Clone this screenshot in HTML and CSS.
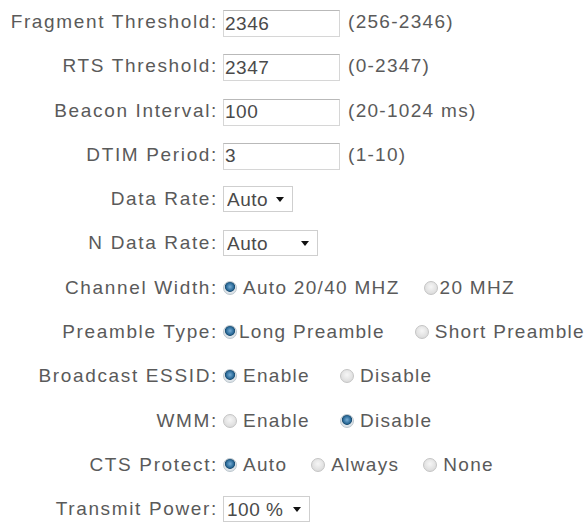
FILE: index.html
```html
<!DOCTYPE html>
<html lang="en">
<head>
<meta charset="UTF-8">
<meta name="viewport" content="width=device-width, initial-scale=1.0">
<title>Wireless Advanced Settings</title>
<link rel="stylesheet" href="styles.css">
</head>
<body>

<!-- Advanced wireless settings form -->
<form class="settings">
    <div class="row">
        <label class="label" for="frag">Fragment Threshold:</label>
        <input class="text" id="frag" type="text" value="2346">
        <span class="hint">(256-2346)</span>
    </div>
    <div class="row">
        <label class="label" for="rts">RTS Threshold:</label>
        <input class="text" id="rts" type="text" value="2347">
        <span class="hint">(0-2347)</span>
    </div>
    <div class="row">
        <label class="label" for="beacon">Beacon Interval:</label>
        <input class="text" id="beacon" type="text" value="100">
        <span class="hint">(20-1024 ms)</span>
    </div>
    <div class="row">
        <label class="label" for="dtim">DTIM Period:</label>
        <input class="text" id="dtim" type="text" value="3">
        <span class="hint">(1-10)</span>
    </div>

    <div class="row">
        <label class="label" for="rate">Data Rate:</label>
        <span class="select rate">
            <select id="rate"><option>Auto</option></select>
            <svg class="arrow" width="8" height="5" viewBox="0 0 8 5"><path d="M0 0H8L4 5Z" fill="#111"/></svg>
        </span>
    </div>
    <div class="row">
        <label class="label" for="nrate">N Data Rate:</label>
        <span class="select nrate">
            <select id="nrate"><option>Auto</option></select>
            <svg class="arrow" width="8" height="5" viewBox="0 0 8 5"><path d="M0 0H8L4 5Z" fill="#111"/></svg>
        </span>
    </div>

    <div class="row">
        <span class="label">Channel Width:</span>
        <label class="option"><input type="radio" name="cw" checked>Auto 20/40 MHZ</label>
        <label class="option tight"><input type="radio" name="cw">20 MHZ</label>
    </div>
    <div class="row">
        <span class="label">Preamble Type:</span>
        <label class="option tight wide"><input type="radio" name="pre" checked>Long Preamble</label>
        <label class="option"><input type="radio" name="pre">Short Preamble</label>
    </div>
    <div class="row">
        <span class="label">Broadcast ESSID:</span>
        <label class="option wide"><input type="radio" name="essid" checked>Enable</label>
        <label class="option"><input type="radio" name="essid">Disable</label>
    </div>
    <div class="row">
        <span class="label">WMM:</span>
        <label class="option wide"><input type="radio" name="wmm">Enable</label>
        <label class="option"><input type="radio" name="wmm" checked>Disable</label>
    </div>
    <div class="row">
        <span class="label">CTS Protect:</span>
        <label class="option"><input type="radio" name="cts" checked>Auto</label>
        <label class="option"><input type="radio" name="cts">Always</label>
        <label class="option"><input type="radio" name="cts">None</label>
    </div>

    <div class="row">
        <label class="label" for="power">Transmit Power:</label>
        <span class="select power">
            <select id="power"><option>100 %</option></select>
            <svg class="arrow" width="8" height="5" viewBox="0 0 8 5"><path d="M0 0H8L4 5Z" fill="#111"/></svg>
        </span>
    </div>
</form>

</body>
</html>
```

FILE: styles.css
```css
body {
    margin: 0;
    background: #fff;
    font-family: "Liberation Sans", Arial, sans-serif;
    font-size: 19px;
    letter-spacing: 1.3px;
    color: #5a5a5a;
}
.settings {
    display: flex;
    flex-direction: column;
}
.row {
    display: flex;
    align-items: center;
    height: 44.27px;
    white-space: nowrap;
}
.label {
    width: 218px;
    margin-right: 5px;
    text-align: right;
    letter-spacing: 1.65px;
    flex-shrink: 0;
}

/* text boxes */
.text {
    width: 117px;
    height: 27px;
    box-sizing: border-box;
    margin: 3px 0 0;
    padding: 0 1px;
    border: 1px solid #d6d6d6;
    border-top-color: #b9b9b9;
    font: inherit;
    letter-spacing: 0.5px;
    color: #4a4a4a;
    background: #fff;
}
.hint {
    margin-left: 8px;
}

/* drop downs */
.select {
    position: relative;
    display: inline-block;
}
.select select {
    appearance: none;
    -webkit-appearance: none;
    height: 26px;
    box-sizing: border-box;
    margin: 0;
    padding: 0 3px;
    border: 1px solid #cfcfcf;
    border-radius: 0;
    background: #fff;
    font: inherit;
    letter-spacing: 0.5px;
    color: #4a4a4a;
}
.select.rate select { width: 70px; }
.select.nrate select { width: 95px; }
.select.power select { width: 87px; }
.arrow {
    position: absolute;
    right: 9px;
    top: 11px;
    pointer-events: none;
}

/* radio buttons */
.option {
    display: inline-flex;
    align-items: center;
    margin-right: 24px;
}
.option.wide {
    margin-right: 30px;
}
.option input {
    appearance: none;
    -webkit-appearance: none;
    width: 14px;
    height: 14px;
    margin: 0 6px 0 0;
    border-radius: 50%;
    border: 1px solid #c4c4c4;
    background: radial-gradient(circle at 50% 40%, #f6f6f6 0, #dedede 70%, #d0d0d0 100%);
    box-sizing: border-box;
}
.option.tight input {
    margin-right: 2px;
}
.option input:checked {
    border-color: #bcc6cd;
    background:
        radial-gradient(circle at 50% 40%, #78aed6 0, #2a6a98 40%, #1a4d72 50%, transparent 58%),
        radial-gradient(circle, #eef2f5 0, #d2dbe1 100%);
}
```
